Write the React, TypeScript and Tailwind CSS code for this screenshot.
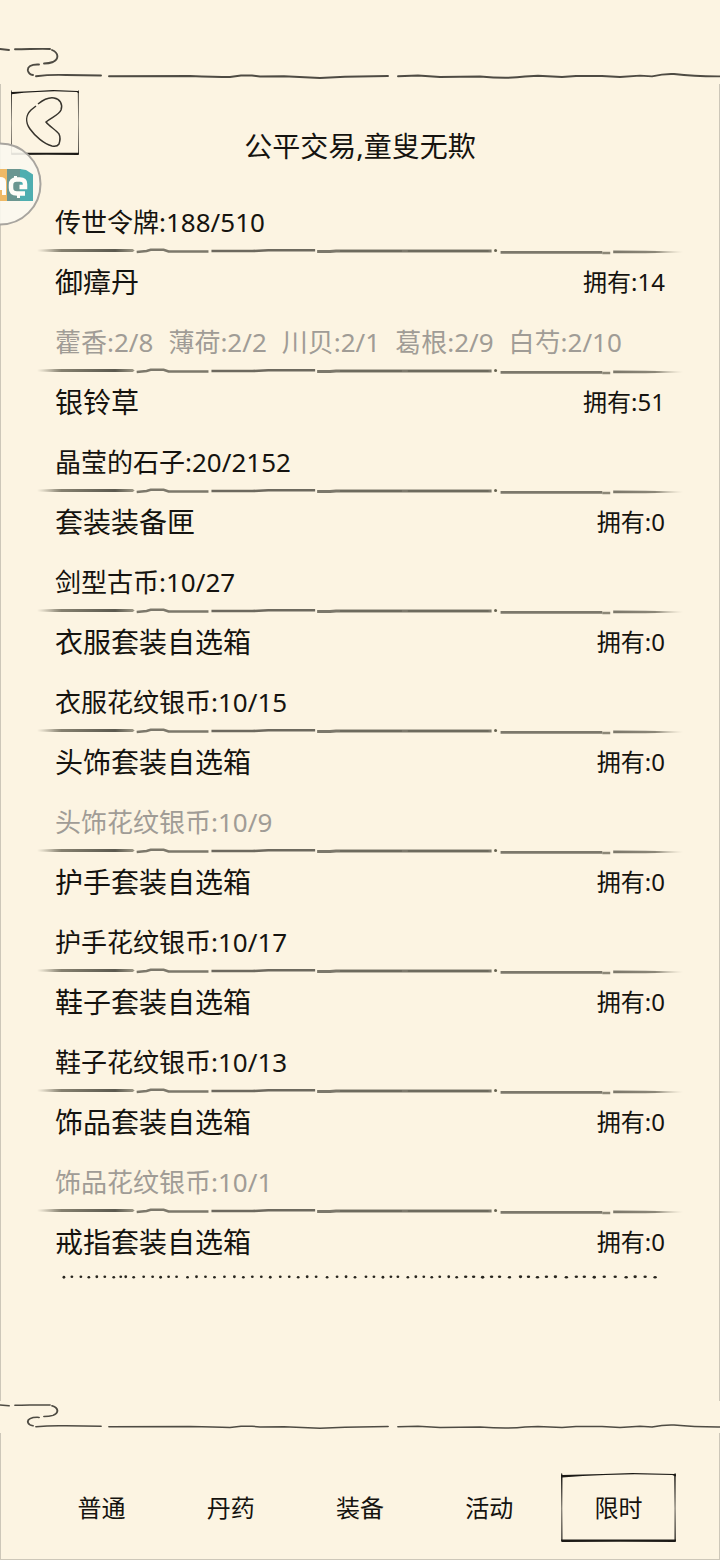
import { useState } from "react";

type Item = {
  name: string;
  owned: number;
  cost?: string[];
  short?: boolean;
};

const items: Item[] = [
  { name: "御瘴丹", owned: 14, cost: ["藿香:2/8", "薄荷:2/2", "川贝:2/1", "葛根:2/9", "白芍:2/10"], short: true },
  { name: "银铃草", owned: 51, cost: ["晶莹的石子:20/2152"] },
  { name: "套装装备匣", owned: 0, cost: ["剑型古币:10/27"] },
  { name: "衣服套装自选箱", owned: 0, cost: ["衣服花纹银币:10/15"] },
  { name: "头饰套装自选箱", owned: 0, cost: ["头饰花纹银币:10/9"], short: true },
  { name: "护手套装自选箱", owned: 0, cost: ["护手花纹银币:10/17"] },
  { name: "鞋子套装自选箱", owned: 0, cost: ["鞋子花纹银币:10/13"] },
  { name: "饰品套装自选箱", owned: 0, cost: ["饰品花纹银币:10/1"], short: true },
  { name: "戒指套装自选箱", owned: 0 },
];

const tabs = ["普通", "丹药", "装备", "活动", "限时"];

const dots = [
  63, 71, 80, 88, 96, 104, 113, 120, 125, 133, 143, 152, 160, 168, 176, 187, 196, 205, 214, 224, 234, 243, 252, 261,
  270, 280, 289, 298, 307, 316, 327, 337, 346, 355, 366, 374, 383, 391, 398, 408, 416, 424, 432, 440, 449, 457, 466,
  474, 483, 492, 500, 510, 521, 529, 538, 547, 556, 567, 577, 585, 595, 605, 616, 627, 636, 646, 656,
];

function CloudLine({ className }: { className: string }) {
  return (
    <svg
      viewBox="0 0 720 40"
      preserveAspectRatio="none"
      className={`block w-full shrink-0 ${className}`}
      fill="none"
      stroke="#4e4b43"
      strokeWidth="1.9"
      strokeLinecap="round"
      aria-hidden="true"
    >
      <path d="M0 5 L9 6 M15 5.300 C28 5.300 40 4.500 50 5 M52 6 C59 9 59 15 53 18 Q49 19.500 44 19.500 M39 20.500 C31 20 27 23 28 27 Q29 30.500 33 31" />
      <path d="M36 32.200 Q50 30.500 66 31 L101 31.500 M109 32.200 L190 32 Q215 33 230 33 L241 31.500 H252 L260 32.500 L284 32.300 L320 34 L345 32.800 L388 32" />
      <path d="M398 32.300 L418 31.500 L440 33 L480 32.500 Q508 35 525 32.500 L538 31.800 L562 33 L576 32 H602 L620 33 L640 31.600 L652 32.400 Q664 29.500 674 30 Q694 32.500 720 32.400" />
    </svg>
  );
}

function BrushDivider() {
  return (
    <svg viewBox="0 0 648 8" preserveAspectRatio="none" className="block h-2 w-full" aria-hidden="true">
      <defs>
        <linearGradient id="brushStart">
          <stop offset="0" stopColor="#85806f" stopOpacity="0" />
          <stop offset="0.25" stopColor="#85806f" />
          <stop offset="0.8" stopColor="#5b594e" />
          <stop offset="1" stopColor="#a19b89" />
        </linearGradient>
        <linearGradient id="brushEnd">
          <stop offset="0" stopColor="#7b776a" />
          <stop offset="0.6" stopColor="#8c8778" />
          <stop offset="1" stopColor="#a19b89" stopOpacity="0" />
        </linearGradient>
      </defs>
      <path d="M0 2.500 L18 2 H96 L98 3.500 L96 5 H18 L0 4.500 Z" fill="url(#brushStart)" />
      <path d="M100 5 L110 4 L114 2.800 H127 L132 4.500 H172" fill="none" stroke="#7c786b" strokeWidth="2.500" />
      <path d="M175 4 H216 L232 3.300 H279" fill="none" stroke="#6d695e" strokeWidth="2.600" />
      <path d="M281 4.500 H294 L300 4 H456" fill="none" stroke="#7c786b" strokeWidth="3" />
      <path d="M304 4 H366 M372 4 H453" stroke="#5f5c51" strokeWidth="1" />
      <circle cx="460" cy="3.600" r="1.500" fill="#66624f" />
      <path d="M465 5.300 H567" stroke="#7c786b" strokeWidth="2.800" />
      <path d="M567 6 H575" stroke="#8d8878" strokeWidth="2.500" />
      <path d="M578 3.500 L610 3.800 L648 4.500 V5.500 L610 6.300 H578 Z" fill="url(#brushEnd)" />
    </svg>
  );
}

function DottedLine() {
  return (
    <svg viewBox="36 0 648 6" preserveAspectRatio="none" className="block h-2 w-full" fill="#28251e" aria-hidden="true">
      {dots.map((x, i) => (
        <ellipse key={x} cx={x} cy={i % 3 === 0 ? 3.2 : 2.8} rx={i > 45 ? 1.7 : 1.4} ry={i % 4 === 0 ? 1.1 : 0.9} />
      ))}
    </svg>
  );
}

function InkFrame() {
  return (
    <svg
      viewBox="0 0 116 70"
      preserveAspectRatio="none"
      className="absolute inset-0 h-full w-full"
      fill="#1c1a16"
      aria-hidden="true"
    >
      <path d="M0 1 L1 0 L1.500 2 L42 1 L72 0 L114 1 L115 0 L116 2 L115.500 3.500 L112 2 L74 1.200 L45 2 L22 3 L1 4.500 Z" />
      <path d="M0 2 H1.500 L1.200 35 L1.500 68 H0.300 L0.500 35 Z M114 2 H115.500 L115.200 35 L115.600 68 H114.300 L114.500 35 Z" />
      <path d="M0 66.500 H116 L115.500 69 L60 68.700 L0.500 69 Z" />
    </svg>
  );
}

function FloatingBadge() {
  return (
    <svg viewBox="0 0 42 84" className="absolute top-[142px] left-0 h-21 w-[42px]" aria-hidden="true">
      <circle cx="0" cy="42" r="40.500" fill="#fbf8ef" fillOpacity="0.9" stroke="#a8a59f" strokeWidth="2" />
      <path d="M0 27 H7 V59 H0 Z" fill="#efb966" />
      <path d="M7 27 H21 V59 H7 Z" fill="#6b9690" />
      <path d="M20 27 L26 28 L33 32.500 V59 H20 Z" fill="#4eaeb0" />
      <path d="M0 35 Q6 35 6 40 V53 H2 V48 H0 Z" fill="#fffdf8" />
      <path
        d="M25 51.500 H17 Q11 51.500 11 46 V43 Q11 37.500 16.500 37.500 H20 Q25 37.500 25 42 V45 H19.500"
        fill="none"
        stroke="#fffdf8"
        strokeWidth="4.500"
      />
      <path d="M14 34 H17 V37 H14 Z M17 52 H20 V56 H17 Z" fill="#fffdf8" />
    </svg>
  );
}

export default function App() {
  const [active, setActive] = useState("限时");

  return (
    <div className="relative flex min-h-screen flex-col overflow-hidden bg-[#fcf4e2] pt-11 font-['Noto_Sans','Noto_Sans_CJK_SC',sans-serif] text-[#15130f]">
      <CloudLine className="h-10" />
      <div className="flex-1 border-x border-[#cdc7b9]">
        <header className="grid grid-cols-[1fr_auto_1fr] px-2.5 pt-1.5">
          <button type="button" aria-label="返回" className="relative h-[66px] w-17">
            <InkFrame />
            <svg
              viewBox="0 0 68 66"
              className="relative block h-full w-full"
              fill="none"
              stroke="#37342d"
              strokeWidth="1.500"
              aria-hidden="true"
            >
              <path d="M27 14 C32 10 37 7 43 8 C49 9 52 14 50 20 C48 25 41 27 35 32 C38 36 45 40 48 44 Q50 48 48 54 Q46 57 41 56 C33 54 24 46 19 39 C14 32 15 25 20 20 L25 16" />
            </svg>
          </button>
          <h1 className="mt-9 text-[28px] leading-10">公平交易,童叟无欺</h1>
        </header>

        <main className="px-9 pt-[23px]">
          <p className="px-[18px] pt-2 text-[26px] leading-[50px]">传世令牌:188/510</p>
          <ul>
            {items.map((item) => (
              <li key={item.name}>
                <BrushDivider />
                <div className="flex items-center justify-between px-[18px] leading-[54px]">
                  <h2 className="text-[28px]">{item.name}</h2>
                  <span className="text-2xl leading-[54px]">拥有:{item.owned}</span>
                </div>
                {item.cost && (
                  <p
                    className={`flex gap-[15px] pt-2 pl-[18px] text-[26px] leading-[50px] whitespace-nowrap ${
                      item.short ? "text-[#a09c96]" : ""
                    }`}
                  >
                    {item.cost.map((c) => (
                      <span key={c}>{c}</span>
                    ))}
                  </p>
                )}
              </li>
            ))}
          </ul>
          <div className="pt-1">
            <DottedLine />
          </div>
        </main>
      </div>
      <FloatingBadge />

      <CloudLine className="h-8" />
      <nav className="grid grid-cols-5 border-x border-b border-[#cdc7b9] px-9 pt-10 pb-4">
        {tabs.map((tab) => (
          <button
            key={tab}
            type="button"
            aria-pressed={tab === active}
            onClick={() => setActive(tab)}
            className="relative mx-[7px] h-[70px] text-2xl"
          >
            {tab === active && <InkFrame />}
            {tab}
          </button>
        ))}
      </nav>
    </div>
  );
}
